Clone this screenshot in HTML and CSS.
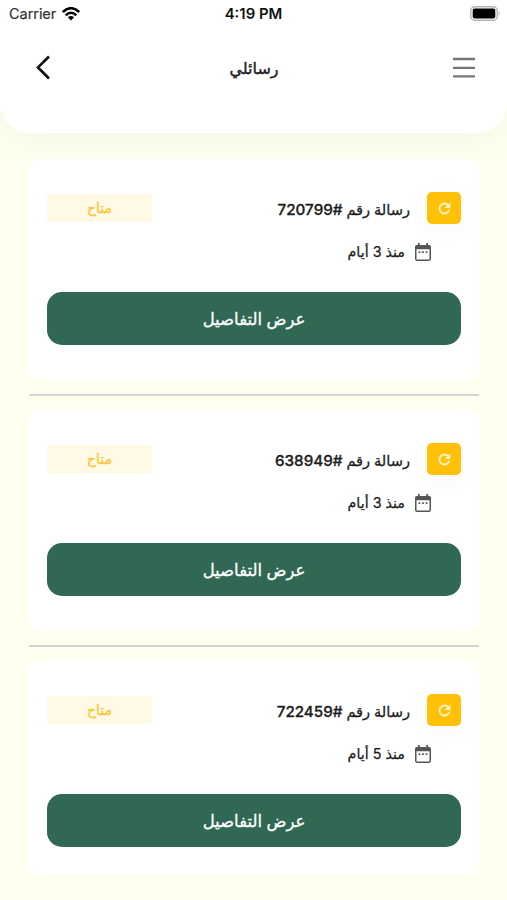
FILE: index.html
```html
<!DOCTYPE html>
<html lang="ar" dir="rtl">
<head>
<meta charset="utf-8">
<title>رسائلي</title>
<link rel="stylesheet" href="styles.css">
</head>
<body>
<svg class="defs" width="0" height="0" aria-hidden="true">
  <symbol id="refresh" viewBox="0 0 24 24"><path d="M17.65 6.35A8 8 0 1 0 19.73 14h-2.08A6 6 0 1 1 12 6c1.66 0 3.14.69 4.22 1.78L13 11h7V4z"/></symbol>
  <symbol id="calendar" viewBox="0 0 18 20"><path fill-rule="evenodd" d="M3.300 0h2v2h7.400V0h2v2H16a2 2 0 0 1 2 2v14a2 2 0 0 1-2 2H2a2 2 0 0 1-2-2V4a2 2 0 0 1 2-2h1.300zM1.700 7v11.300h14.600V7zM4 9.200h2v2H4zm4 0h2v2H8zm4 0h2v2h-2z"/></symbol>
</svg>
<header class="header">
  <div class="status" dir="ltr">
    <div class="carrier"><span>Carrier</span>
      <svg width="18" height="14" viewBox="0 0 18 14"><g fill="none" stroke="#000" stroke-width="2.500"><path d="M.8 5Q9-2.600 17.200 5"/><path d="M3.700 8.200Q9 3.400 14.300 8.200"/></g><path d="M5.900 10.300Q9 7.900 12.100 10.300L9 13.600z"/></svg>
    </div>
    <span class="time">4:19 PM</span>
    <svg class="battery" width="31" height="15" viewBox="0 0 31 15"><rect x=".8" y=".8" width="26.400" height="13.400" rx="3.800" fill="#fff" stroke="#b5b5b5" stroke-width="1.400"/><rect x="2.700" y="2.600" width="22.600" height="9.800" rx="2"/><path d="M28.700 5q2 2.500 0 5z" fill="#aaa"/></svg>
  </div>
  <nav class="nav">
    <svg width="24" height="22" viewBox="0 0 24 22" stroke="#777" stroke-width="2.300"><path d="M1 2h22M1 10.800h22M1 19.300h22"/></svg>
    <h1 class="title">رسائلي</h1>
    <svg width="16" height="25" viewBox="0 0 16 25" fill="none" stroke="#111" stroke-width="2.700"><path d="M14 1.500 3 12.400 14 23.500"/></svg>
  </nav>
</header>
<main class="list">
  <article class="card">
    <div class="top"><span class="badge"><svg><use href="#refresh"/></svg></span><h2 class="name">رسالة رقم <bdi>720799#</bdi></h2><span class="state">متاح</span></div>
    <div class="date"><svg><use href="#calendar"/></svg><span>منذ 3 أيام</span></div>
    <button class="button">عرض التفاصيل</button>
  </article>
  <hr>
  <article class="card">
    <div class="top"><span class="badge"><svg><use href="#refresh"/></svg></span><h2 class="name">رسالة رقم <bdi>638949#</bdi></h2><span class="state">متاح</span></div>
    <div class="date"><svg><use href="#calendar"/></svg><span>منذ 3 أيام</span></div>
    <button class="button">عرض التفاصيل</button>
  </article>
  <hr>
  <article class="card last">
    <div class="top"><span class="badge"><svg><use href="#refresh"/></svg></span><h2 class="name">رسالة رقم <bdi>722459#</bdi></h2><span class="state">متاح</span></div>
    <div class="date"><svg><use href="#calendar"/></svg><span>منذ 5 أيام</span></div>
    <button class="button">عرض التفاصيل</button>
  </article>
</main>
</body>
</html>
```
FILE: styles.css
```css
* { box-sizing: border-box; }
body { margin: 0; height: 900px; overflow: hidden; background: #fffff0; color: #1c1c1c; font-family: Inter, "DejaVu Sans", sans-serif; }
.defs { display: block; }
svg { display: block; flex: none; }
.header { height: 133px; background: #fff; border-radius: 0 0 29px 29px; box-shadow: 0 4px 32px rgba(90, 110, 60, .07); }
.status { display: grid; grid-template-columns: 1fr auto 1fr; align-items: center; height: 27px; padding: 0 6px 0 9px; color: #111; font-size: 14.500px; }
.carrier { display: flex; align-items: center; gap: 6px; }
.carrier span { color: #333; width: 47px; letter-spacing: -.05px; -webkit-text-stroke: .2px; }
.time { margin-right: 3px; font-weight: 600; font-size: 14.900px; }
.battery { justify-self: end; }
.nav { display: grid; grid-template-columns: 1fr auto 1fr; align-items: center; height: 81px; padding: 0 31px 0 35px; }
.nav > :last-child { justify-self: end; }
.title { margin: 0 3px 0 0; font-size: 16px; font-weight: 500; -webkit-text-stroke: .4px; }
.list { padding: 26px 28px 0 29px; }
.card { height: 220px; padding: 33px 18px 0; background: #fff; border-radius: 10px; }
.last { height: 213px; }
hr { height: 2px; margin: 15px 0 14px; border: 0; background: #d4d4d4; }
.top { display: flex; align-items: center; height: 32px; }
.badge { display: grid; place-items: center; width: 34px; height: 32px; border-radius: 5px; background: #ffc107; box-shadow: 0 4px 26px rgba(40, 40, 80, .04); }
.badge svg { width: 17px; height: 17px; fill: #fff8d6; stroke: #fff8d6; stroke-width: .5; }
.name { margin: 2px 17px 0 auto; font-size: 14.600px; font-weight: 500; white-space: nowrap; -webkit-text-stroke: .3px; }
.name bdi { font-size: 15.200px; letter-spacing: .15px; }
.state { width: 105px; height: 28px; border-radius: 3px; background: #fff9e5; color: #f8c83c; font-size: 14px; line-height: 28px; text-align: center; -webkit-text-stroke: .35px; }
.date { display: flex; align-items: center; gap: 10px; height: 20px; margin: 18px 30px 0 0; font-size: 14.300px; -webkit-text-stroke: .25px; }
.date span { margin-top: -1px; }
.date svg { width: 16px; height: 18px; fill: #555; }
.button { display: block; width: 100%; height: 53px; margin-top: 30px; padding: 0; border: 0; border-radius: 15px; background: #306854; color: #fff; font: 500 16.500px Inter, "DejaVu Sans", sans-serif; -webkit-text-stroke: .3px; }
```
